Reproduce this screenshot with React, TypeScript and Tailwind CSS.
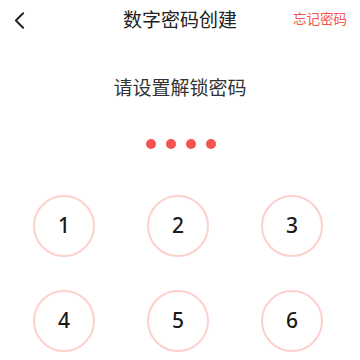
import { ChevronLeft } from "lucide-react";

const keys = ["1", "2", "3", "4", "5", "6"];

export default function App() {
  return (
    <div
      className="h-[360px] w-[360px] overflow-hidden bg-white"
      style={{ fontFamily: '"Noto Sans", "Noto Sans CJK SC", sans-serif' }}
    >
      <header className="relative flex h-[40px] items-center justify-center">
        <button type="button" className="absolute left-[5px] top-[6px] text-[#222]">
          <ChevronLeft size={29} strokeWidth={1.6} />
        </button>
        <h1 className="text-[19px] leading-none text-[#222]">数字密码创建</h1>
        <span className="absolute right-[13px] top-[13px] text-[13.5px] leading-none text-[#f5554f]">
          忘记密码
        </span>
      </header>

      <p className="mt-[38px] text-center text-[19px] leading-[20px] text-[#333]">
        请设置解锁密码
      </p>

      <div className="mt-[41px] flex justify-center gap-[10px] pl-[1px]">
        {[0, 1, 2, 3].map((dot) => (
          <span key={dot} className="h-[10px] w-[10px] rounded-full bg-[#f5534f]" />
        ))}
      </div>

      <div className="ml-[33px] mt-[46px] grid grid-cols-[62px_62px_62px] gap-x-[52px] gap-y-[33px]">
        {keys.map((key) => (
          <div
            key={key}
            className="flex h-[62px] w-[62px] items-center justify-center rounded-full border-2 border-[#fdd0ce] text-[21px] font-medium text-[#1a1a1a]"
          >
            {key}
          </div>
        ))}
      </div>
    </div>
  );
}
